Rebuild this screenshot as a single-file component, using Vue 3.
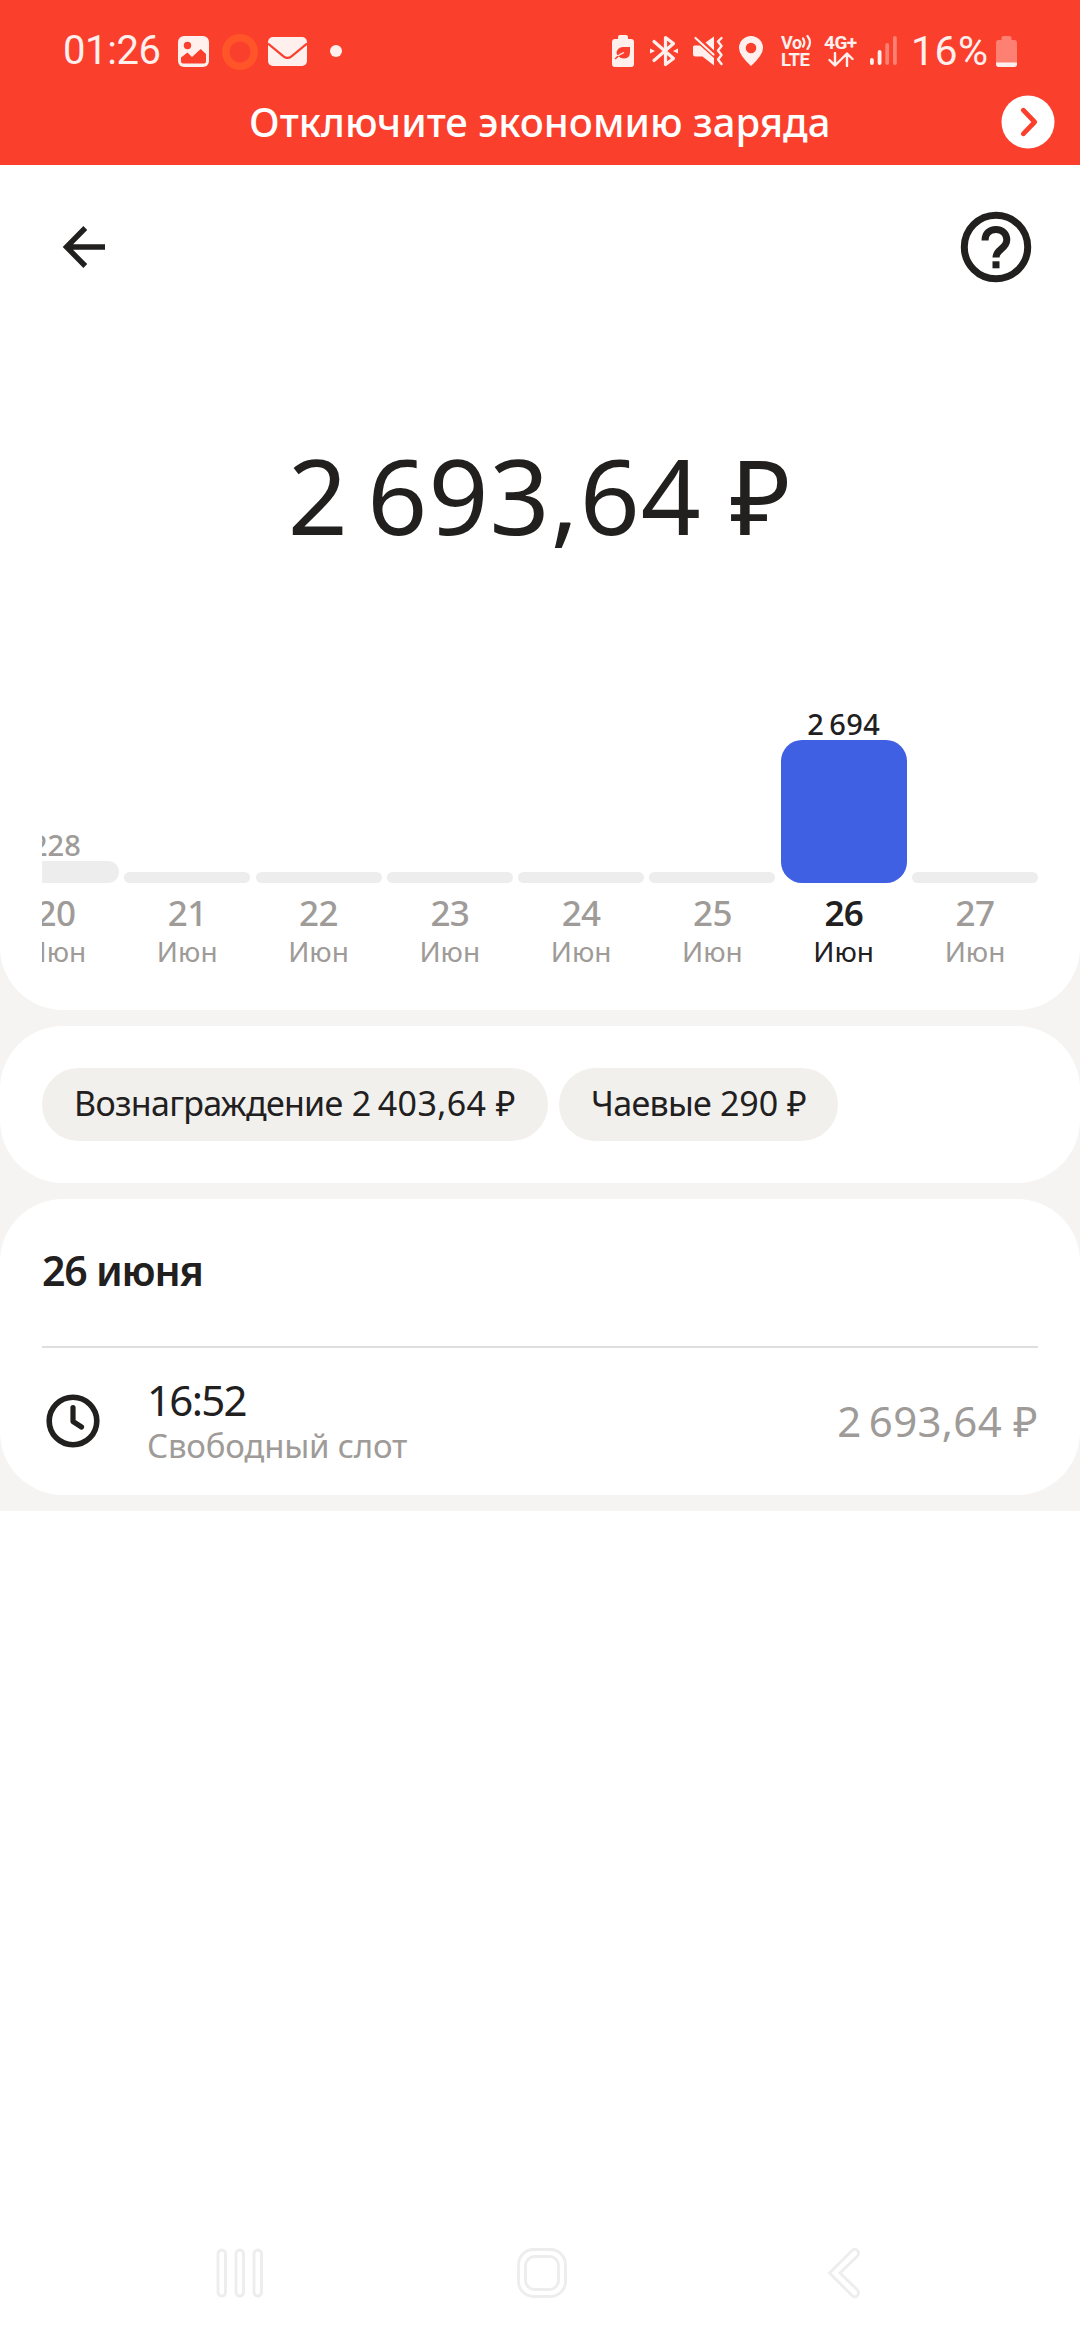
<script setup>
const days = [
  { day: 20, value: '228', height: 22, radius: 11 },
  { day: 21, height: 11, radius: 5.5 },
  { day: 22, height: 11, radius: 5.5 },
  { day: 23, height: 11, radius: 5.5 },
  { day: 24, height: 11, radius: 5.5 },
  { day: 25, height: 11, radius: 5.5 },
  { day: 26, value: '2\u2009694', height: 143, radius: 21, active: true },
  { day: 27, height: 11, radius: 5.5 }
]
const signal = [
  { x: 0, y: 22, h: 7, on: true },
  { x: 7.7, y: 14, h: 15, on: true },
  { x: 15.3, y: 7, h: 22, on: false },
  { x: 23, y: 0, h: 29, on: false }
]
</script>

<template>
  <div class="screen">
    <header class="alert">
      <div class="status">
        <span class="clock">01:26</span>
        <svg class="s-photo" width="31" height="31" viewBox="0 0 31 31">
          <rect width="31" height="31" rx="6" fill="#fff0ee" />
          <circle cx="9.5" cy="9.5" r="3.7" fill="#fb3f2d" />
          <path d="M3 21.5 9.5 16.5 14 21 22.7 13 28 18V25.500Q28 27.500 26 27.500H5Q3 27.500 3 25.500Z" fill="#fb3f2d" />
        </svg>
        <svg class="s-ring" width="36" height="36" viewBox="0 0 36 36">
          <circle cx="18" cy="18" r="14.2" fill="none" stroke="#ff5529" stroke-width="7.400" />
        </svg>
        <svg class="s-mail" width="39" height="29" viewBox="0 0 39 29">
          <rect width="39" height="29" rx="5" fill="#fff0ee" />
          <path d="M0 6.500 15.500 19.300Q19.500 22.500 23.500 19.300L39 6.500" fill="none" stroke="#fb3f2d" stroke-width="2.200" />
        </svg>
        <i class="s-dot"></i>
        <div class="status-right">
          <svg class="s-eco" width="22" height="32" viewBox="0 0 22 32">
            <path d="M6 4V2Q6 0 8 0h6q2 0 2 2v2h3q3 0 3 3v22q0 3-3 3H3q-3 0-3-3V7q0-3 3-3Z" fill="#fff0ee" />
            <path d="M4.500 18.500Q5 12 11 12H18V17Q18 23.500 12 23.500 8.500 23.500 6.500 21.500M3.500 24Q6 19.500 12.500 17" fill="#fb3f2d" />
            <path d="M3.300 23.500Q6 20 12 17.500" fill="none" stroke="#fff0ee" stroke-width="1.300" />
            <path d="M3 24 6 21.300" stroke="#fb3f2d" stroke-width="1.500" />
          </svg>
          <svg class="s-bt" width="28" height="32" viewBox="0 0 28 32">
            <path d="M4 6.500 23.500 23.500 15.500 29.500V2.500L23.500 8.500 4 25.500" fill="none" stroke="#fff0ee" stroke-width="3.200" stroke-linejoin="round" stroke-linecap="round" />
            <path d="M0 13.500 5 16 0 18.500ZM28 13.500 23 16 28 18.500Z" fill="#fff0ee" />
          </svg>
          <svg class="s-mute" width="30" height="30" viewBox="0 0 30 30">
            <path d="M0 11Q0 9.500 1.500 9.500H7L21 22V29.500L9.500 20.500H2.500Q0 20.500 0 18ZM12.500 6.500 21 0.500V14.500Z" fill="#fff0ee" />
            <path d="M2.500 2 20.500 18.500" stroke="#fff0ee" stroke-width="2.200" stroke-linecap="round" />
            <path d="M28.500 2 25 5.500 28.500 10 25 14.500 28.500 19 25 23.500 28.500 28" fill="none" stroke="#fff0ee" stroke-width="2.400" stroke-linecap="round" stroke-linejoin="round" />
          </svg>
          <svg class="s-pin" width="24" height="30" viewBox="0 0 24 30">
            <path fill-rule="evenodd" d="M12 30Q0 19 0 12A12 12 0 0 1 24 12Q24 19 12 30ZM12 6.700a5.300 5.300 0 1 0 0 10.600a5.300 5.300 0 0 0 0-10.600Z" fill="#fff0ee" />
          </svg>
          <div class="volte">
            <span>Vo<svg width="10" height="15" viewBox="0 0 10 15"><path d="M1 3.500Q3.800 7.500 1 11.500M5.500 1Q10.500 7.500 5.500 14" fill="none" stroke="#fff0ee" stroke-width="2.200" stroke-linecap="round" /></svg></span>
            <span class="lte">LTE</span>
          </div>
          <div class="net">
            <span>4G+</span>
            <svg width="26" height="15" viewBox="0 0 26 15">
              <path d="M7 1V13M1.500 8 7 13.500 12.500 8M19 14V2M13.500 7 19 1.500 24.500 7" fill="none" stroke="#fff0ee" stroke-width="2.400" stroke-linecap="round" stroke-linejoin="round" />
            </svg>
          </div>
          <svg class="s-signal" width="27" height="29" viewBox="0 0 27 29">
            <rect v-for="b in signal" :key="b.x" :x="b.x" :y="b.y" width="3.8" :height="b.h" rx="1.900" :fill="b.on ? '#fff0ee' : '#fd8073'" />
          </svg>
          <span class="percent">16%</span>
          <svg class="s-battery" width="21" height="31" viewBox="0 0 21 31">
            <path d="M5.500 4V2Q5.500 0 7.500 0h6q2 0 2 2v2h3q2.500 0 2.500 3v21q0 3-3 3H3q-3 0-3-3V7q0-3 2.500-3Z" fill="#fd8073" />
            <path d="M0 26.500H21V28q0 3-3 3H3q-3 0-3-3Z" fill="#fff0ee" />
          </svg>
        </div>
      </div>
      <div class="banner">
        <span class="banner-text">Отключите экономию заряда</span>
        <svg class="banner-go" width="54" height="54" viewBox="0 0 54 54">
          <circle cx="27" cy="27" r="26.500" fill="#fff" />
          <path d="M22.300 15.200 33.700 27 22.300 38.800" fill="none" stroke="#fb3f2d" stroke-width="4.800" stroke-linecap="round" stroke-linejoin="round" />
        </svg>
      </div>
    </header>

    <main class="content">
      <section class="card summary">
        <div class="toolbar">
          <svg width="44" height="44" viewBox="0 0 44 44">
            <path d="M23.300 3 4.500 22 23.300 41M5 22H43" fill="none" stroke="#21201f" stroke-width="5.400" stroke-linejoin="miter" />
          </svg>
          <svg width="72" height="72" viewBox="0 0 72 72">
            <circle cx="36" cy="36" r="31.700" fill="none" stroke="#21201f" stroke-width="7" />
            <path d="M25 29.500C25 22.500 29.500 18.500 36 18.500S46.800 23 46.800 28.800C46.800 38 36 38 36 46.500" fill="none" stroke="#21201f" stroke-width="7" />
            <rect x="32.500" y="50.300" width="7" height="7" fill="#21201f" />
          </svg>
        </div>
        <h1 class="total">2&thinsp;693,64 ₽</h1>
        <div class="chart">
          <div v-for="d in days" :key="d.day" class="column" :class="{ active: d.active }">
            <span v-if="d.value" class="value">{{ d.value }}</span>
            <div class="bar" :style="{ height: d.height + 'px', borderRadius: d.radius + 'px' }"></div>
            <span class="day">{{ d.day }}</span>
            <span class="month">Июн</span>
          </div>
        </div>
      </section>

      <section class="card chips">
        <div class="chip reward"><span class="label">Вознаграждение</span> 2&thinsp;403,64 ₽</div>
        <div class="chip tips"><span class="label">Чаевые</span> 290 ₽</div>
      </section>

      <section class="card details">
        <h2 class="date">26 июня</h2>
        <div class="slot">
          <svg width="54" height="54" viewBox="0 0 54 54">
            <circle cx="27" cy="27" r="23.800" fill="none" stroke="#21201f" stroke-width="5.600" />
            <path d="M27 13.500V27.500L35.500 33" fill="none" stroke="#21201f" stroke-width="5.200" stroke-linecap="round" stroke-linejoin="round" />
          </svg>
          <div class="slot-text">
            <span class="time">16:52</span>
            <span class="kind">Свободный слот</span>
          </div>
          <span class="amount">2&thinsp;693,64 ₽</span>
        </div>
      </section>
    </main>

    <nav class="navbar">
      <svg class="recents" width="48" height="50" viewBox="0 0 48 50">
        <rect v-for="x in [2, 20, 38]" :key="x" :x="x" y="2" width="7.500" height="46" rx="3.750" />
      </svg>
      <svg class="home" width="52" height="52" viewBox="0 0 52 52">
        <rect x="2.500" y="2.500" width="47" height="47" rx="15" />
        <rect x="9.500" y="9.500" width="33" height="33" rx="9" />
      </svg>
      <svg class="back" width="34" height="52" viewBox="0 0 34 52">
        <path d="M2.500 26 25.500 3Q28 1 30.500 3.500 32.500 6.500 30.500 9L13 26 30.500 43Q32.500 45.500 30.500 48.500 28 51 25.500 49Z" />
      </svg>
    </nav>
  </div>
</template>

<style>
html,
body {
  margin: 0;
  background: #fff;
}
</style>

<style scoped>
.screen {
  width: 1080px;
  height: 2340px;
  display: flex;
  flex-direction: column;
  overflow: hidden;
  background: #fff;
  color: #21201f;
  font-family: "Noto Sans", "Open Sans", sans-serif;
  white-space: nowrap;
}
svg {
  display: block;
  flex: none;
}
.alert {
  height: 165px;
  background: #fb3f2d;
}
.status {
  height: 90px;
  display: flex;
  padding-left: 63px;
  color: #fff0ee;
  font-family: Roboto, sans-serif;
}
.clock {
  width: 115px;
  font-size: 40px;
  line-height: 102px;
  letter-spacing: -0.4px;
}
.s-photo { margin-top: 36px; }
.s-ring { margin: 33.5px 0 0 13px; }
.s-mail { margin: 37px 0 0 10px; }
.s-dot {
  width: 12px;
  height: 12px;
  margin: 45px 0 0 23px;
  border-radius: 50%;
  background: #fff0ee;
}
.status-right {
  flex: 1;
  display: flex;
  padding-left: 270px;
}
.s-eco { margin-top: 35px; }
.s-bt { margin: 35px 0 0 16px; }
.s-mute { margin: 36px 0 0 15px; }
.s-pin { margin: 36px 0 0 16px; }
.volte {
  width: 33px;
  margin: 35px 0 0 18px;
  display: flex;
  flex-direction: column;
  font-size: 18px;
  font-weight: 700;
  line-height: 16px;
  letter-spacing: -0.3px;
}
.volte span { display: flex; }
.volte .lte {
  font-size: 18.5px;
  line-height: 18px;
  letter-spacing: -0.5px;
}
.net {
  width: 34px;
  margin: 35px 0 0 10px;
  display: flex;
  flex-direction: column;
  font-size: 19px;
  font-weight: 700;
  line-height: 16px;
  letter-spacing: -0.5px;
}
.net svg { margin: 1px 0 0 4px; }
.s-signal { margin: 36px 0 0 12px; }
.percent {
  width: 84px;
  padding-left: 14px;
  box-sizing: border-box;
  margin-right: 15px;
  font-size: 41px;
  line-height: 102px;
  letter-spacing: 0.4px;
}
.s-battery { margin-top: 36px; }

.banner {
  display: flex;
  height: 64px;
  align-items: center;
  margin-left: 249px;
}
.banner-text {
  width: 751.5px;
  padding-bottom: 1px;
  font-size: 40px;
  font-weight: 500;
  color: #fff;
}
.content {
  display: flex;
  flex-direction: column;
  gap: 16px;
  padding-bottom: 16px;
  background: #f5f4f2;
}
.card {
  background: #fff;
  border-radius: 63px;
}
.summary {
  height: 845px;
  border-radius: 0 0 63px 63px;
}
.toolbar {
  display: flex;
  align-items: center;
  justify-content: space-between;
  padding: 46px 48px 0 62px;
}
.total {
  margin: 132px 0 0;
  text-align: center;
  font-size: 105px;
  font-weight: 400;
  line-height: 160px;
  letter-spacing: 1px;
}
.chart {
  height: 271px;
  margin: 123px 42px 0;
  display: flex;
  justify-content: flex-end;
  align-items: flex-end;
  gap: 5.3px;
  overflow: hidden;
}
.column {
  width: 126px;
  flex: none;
  display: flex;
  flex-direction: column;
  align-items: center;
  color: #9e9b98;
}
.column.active { color: #21201f; }
.value {
  font-size: 29px;
  font-weight: 500;
  line-height: 32px;
}
.active .value { letter-spacing: 0.3px; }
.bar {
  width: 126px;
  background: #ededed;
}
.active .bar { background: #3f60e2; }
.day {
  margin-top: 9px;
  font-size: 35px;
  font-weight: 500;
  line-height: 42px;
  letter-spacing: -0.6px;
}
.active .day { font-weight: 600; letter-spacing: -0.8px; }
.month {
  margin-top: -1px;
  font-size: 28px;
  line-height: 36px;
}
.chips {
  height: 157px;
  box-sizing: border-box;
  padding: 42px;
  display: flex;
  gap: 11px;
}
.chip {
  height: 73px;
  box-sizing: border-box;
  padding-left: 32px;
  border-radius: 37px;
  background: #f1f0ec;
  font-size: 34px;
  line-height: 71px;
}
.label { letter-spacing: -0.7px; }
.reward {
  width: 506px;
  letter-spacing: 0.4px;
}
.tips { width: 279px; }
.details {
  height: 296px;
  box-sizing: border-box;
  padding: 0 42px;
}
.date {
  margin: 0;
  height: 147px;
  font-size: 41px;
  font-weight: 600;
  line-height: 142px;
  letter-spacing: -1.2px;
  border-bottom: 2px solid #dedede;
}
.slot {
  display: flex;
  align-items: center;
  height: 147px;
  box-sizing: border-box;
  padding: 0 0 2px 4px;
}
.slot-text {
  display: flex;
  flex-direction: column;
  margin-left: 47px;
  padding-top: 2px;
}
.time {
  font-size: 42px;
  line-height: 48px;
  letter-spacing: -1.7px;
}
.kind {
  font-size: 33px;
  line-height: 44px;
  letter-spacing: -0.2px;
  color: #9e9b98;
}
.amount {
  margin-left: auto;
  font-size: 42px;
  letter-spacing: 0.3px;
  color: #9e9b98;
}
.navbar {
  margin-top: auto;
  height: 93px;
  display: flex;
  align-items: flex-start;
}
.navbar svg {
  fill: none;
  stroke: #ededed;
  stroke-width: 2.8;
}
.recents { margin-left: 216px; margin-top: 1px; }
.home { margin-left: 252px; }
.back { margin-left: 259px; }
</style>
